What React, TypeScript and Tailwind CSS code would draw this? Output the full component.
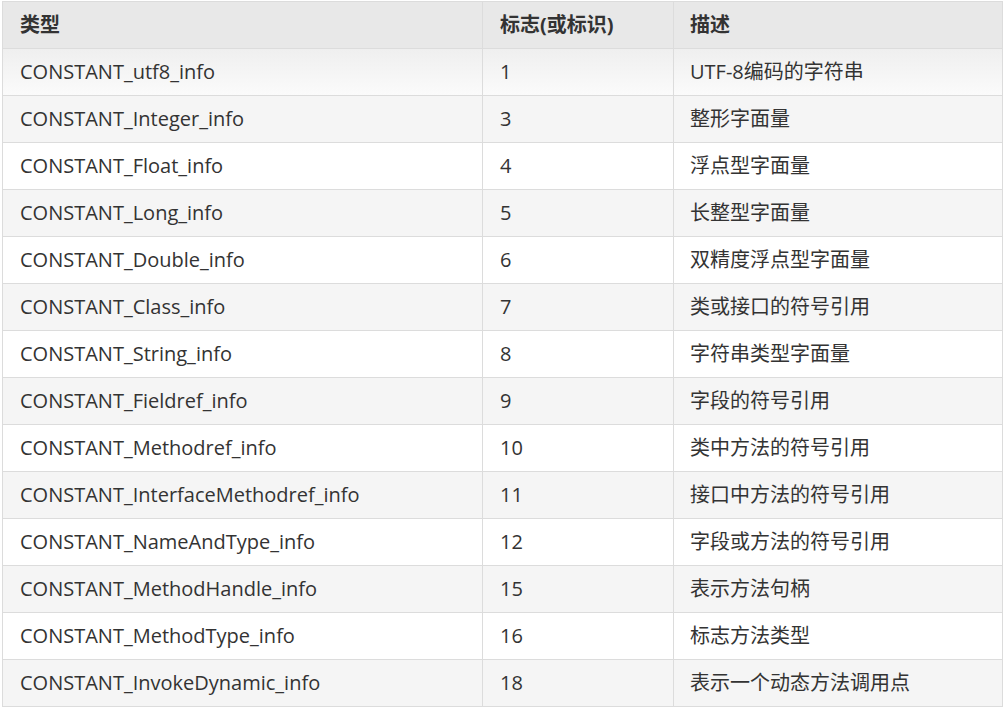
import React from "react";

const rows: [string, string, string][] = [
  ["CONSTANT_utf8_info", "1", "UTF-8编码的字符串"],
  ["CONSTANT_Integer_info", "3", "整形字面量"],
  ["CONSTANT_Float_info", "4", "浮点型字面量"],
  ["CONSTANT_Long_info", "5", "长整型字面量"],
  ["CONSTANT_Double_info", "6", "双精度浮点型字面量"],
  ["CONSTANT_Class_info", "7", "类或接口的符号引用"],
  ["CONSTANT_String_info", "8", "字符串类型字面量"],
  ["CONSTANT_Fieldref_info", "9", "字段的符号引用"],
  ["CONSTANT_Methodref_info", "10", "类中方法的符号引用"],
  ["CONSTANT_InterfaceMethodref_info", "11", "接口中方法的符号引用"],
  ["CONSTANT_NameAndType_info", "12", "字段或方法的符号引用"],
  ["CONSTANT_MethodHandle_info", "15", "表示方法句柄"],
  ["CONSTANT_MethodType_info", "16", "标志方法类型"],
  ["CONSTANT_InvokeDynamic_info", "18", "表示一个动态方法调用点"],
];

const font = {
  fontFamily: '"Open Sans", "Noto Sans CJK SC", sans-serif',
};

export default function App() {
  return (
    <div className="min-h-[713px] w-[1004px] bg-white pl-[2px] pt-[1px]" style={font}>
      <table className="w-[1000px] table-fixed border-collapse text-[20px] text-[#333]">
        <colgroup>
          <col className="w-[480px]" />
          <col className="w-[191px]" />
          <col className="w-[329px]" />
        </colgroup>
        <thead>
          <tr className="h-[47px] bg-[#e8e8e8]">
            <th className="border border-[#dcdcdc] px-[17px] text-left font-bold">类型</th>
            <th className="border border-[#dcdcdc] px-[17px] text-left font-bold">标志(或标识)</th>
            <th className="border border-[#dcdcdc] px-[16px] text-left font-bold">描述</th>
          </tr>
        </thead>
        <tbody>
          {rows.map(([type, tag, desc], i) => (
            <tr
              key={type}
              className={
                i === 0
                  ? "h-[47px] bg-gradient-to-b from-[#efefef] to-[#fbfbfb]"
                  : i % 2 === 1
                    ? "h-[47px] bg-[#f5f5f5]"
                    : "h-[47px] bg-white"
              }
            >
              <td className="border border-[#dcdcdc] px-[17px]">{type}</td>
              <td className="border border-[#dcdcdc] px-[17px]">{tag}</td>
              <td className="border border-[#dcdcdc] px-[16px]">{desc}</td>
            </tr>
          ))}
        </tbody>
      </table>
    </div>
  );
}
